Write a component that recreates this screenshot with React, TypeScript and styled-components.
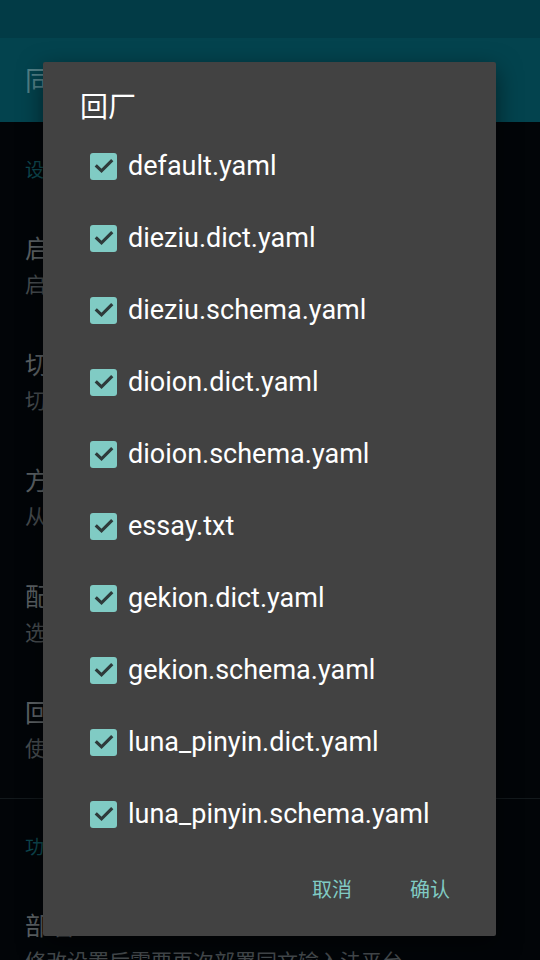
import React from "react";
import styled, { createGlobalStyle } from "styled-components";

const Global = createGlobalStyle`
  html, body { margin: 0; padding: 0; background: #020508; }
  * { box-sizing: border-box; }
`;

const Screen = styled.div`
  position: relative;
  width: 540px;
  height: 960px;
  overflow: hidden;
  background: #020508;
  font-family: Roboto, "Noto Sans CJK SC", sans-serif;
`;

const StatusBar = styled.div`
  height: 38px;
  background: #023b46;
`;

const Toolbar = styled.div`
  height: 84px;
  background: #03434e;
  display: flex;
  align-items: center;
  padding-left: 25px;
  padding-bottom: 2px;
`;

const ToolbarTitle = styled.div`
  font-size: 27px;
  color: #517f86;
`;

const Category = styled.div`
  height: 87px;
  padding: 38px 0 0 25px;
  font-size: 19px;
  line-height: 22px;
  color: #0d4850;
`;

const Pref = styled.div`
  height: 116px;
  padding: 26px 0 0 25px;
  display: flex;
  flex-direction: column;
  gap: 5px;
`;

const PrefTitle = styled.div`
  font-size: 25px;
  line-height: 30px;
  color: #5c6265;
  white-space: nowrap;
`;

const PrefSummary = styled.div`
  font-size: 21px;
  line-height: 30px;
  color: #464c4f;
  white-space: nowrap;
`;

const Divider = styled.div<{ $top: number }>`
  height: 1px;
  margin-top: ${(p) => p.$top}px;
  background: #13191c;
`;

const Dialog = styled.div`
  position: absolute;
  left: 43px;
  top: 62px;
  width: 453px;
  height: 874px;
  background: #424242;
  border-radius: 2px;
  box-shadow: 0 8px 24px rgba(0, 0, 0, 0.5);
  display: flex;
  flex-direction: column;
  padding: 30px 0 10px 0;
`;

const DialogTitle = styled.div`
  padding-left: 37px;
  font-size: 28px;
  line-height: 32px;
  color: #ffffff;
`;

const List = styled.div`
  margin-top: 6px;
  display: flex;
  flex-direction: column;
`;

const Row = styled.div`
  height: 72px;
  display: flex;
  align-items: center;
  padding-left: 47px;
  gap: 11px;
`;

const Box = styled.div`
  width: 27px;
  height: 27px;
  border-radius: 3px;
  background: #80cbc4;
  display: flex;
  align-items: center;
  justify-content: center;
  flex-shrink: 0;
`;

const Label = styled.div`
  font-size: 27px;
  color: #ffffff;
  white-space: nowrap;
`;

const Actions = styled.div`
  flex: 1;
  display: flex;
  justify-content: flex-end;
  align-items: center;
  padding-right: 46px;
  gap: 58px;
`;

const ActionButton = styled.div`
  font-size: 20px;
  color: #80cbc4;
`;

const Check = () => (
  <svg width="22" height="22" viewBox="0 0 24 24">
    <path
      d="M4.2 12.4 L9.3 17.3 L19.8 6.8"
      fill="none"
      stroke="#2e3a3a"
      strokeWidth="3.4"
      strokeLinecap="square"
    />
  </svg>
);

const files = [
  "default.yaml",
  "dieziu.dict.yaml",
  "dieziu.schema.yaml",
  "dioion.dict.yaml",
  "dioion.schema.yaml",
  "essay.txt",
  "gekion.dict.yaml",
  "gekion.schema.yaml",
  "luna_pinyin.dict.yaml",
  "luna_pinyin.schema.yaml",
];

const prefs = [
  ["启用输入法", "启用同文输入法"],
  ["切换输入法", "切换到同文输入法"],
  ["方案", "从列表中选择输入方案"],
  ["配色", "选择配色方案"],
  ["回厂", "使用默认配置文件覆盖用户文件"],
];

export default function App() {
  return (
    <Screen>
      <Global />
      <StatusBar />
      <Toolbar>
        <ToolbarTitle>同文输入法</ToolbarTitle>
      </Toolbar>
      <Category>设置</Category>
      {prefs.map(([t, s]) => (
        <Pref key={t}>
          <PrefTitle>{t}</PrefTitle>
          <PrefSummary>{s}</PrefSummary>
        </Pref>
      ))}
      <Divider $top={9} />
      <Category>功能</Category>
      <Pref>
        <PrefTitle>部署</PrefTitle>
        <PrefSummary>修改设置后需要再次部署同文输入法平台</PrefSummary>
      </Pref>
      <Dialog>
        <DialogTitle>回厂</DialogTitle>
        <List>
          {files.map((f) => (
            <Row key={f}>
              <Box>
                <Check />
              </Box>
              <Label>{f}</Label>
            </Row>
          ))}
        </List>
        <Actions>
          <ActionButton>取消</ActionButton>
          <ActionButton>确认</ActionButton>
        </Actions>
      </Dialog>
    </Screen>
  );
}
